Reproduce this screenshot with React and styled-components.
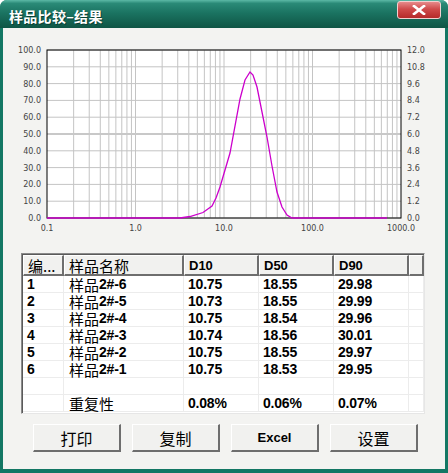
import React from "react";
import styled, { createGlobalStyle } from "styled-components";

const GlobalStyle = createGlobalStyle`
  html, body { margin: 0; padding: 0; background: #ffffff; }
  * { box-sizing: border-box; }
`;

const CJK = `"Noto Sans CJK SC", "Noto Sans", sans-serif`;
const LATIN = `"Liberation Sans", Arial, sans-serif`;

const rows = [
  ["1", "样品2#-6", "10.75", "18.55", "29.98"],
  ["2", "样品2#-5", "10.73", "18.55", "29.99"],
  ["3", "样品2#-4", "10.75", "18.54", "29.96"],
  ["4", "样品2#-3", "10.74", "18.56", "30.01"],
  ["5", "样品2#-2", "10.75", "18.55", "29.97"],
  ["6", "样品2#-1", "10.75", "18.53", "29.95"],
  ["", "", "", "", ""],
  ["", "重复性", "0.08%", "0.06%", "0.07%"],
];

// chart geometry (svg coords)
const PX = 44;
const PY = 22;
const PW = 354;
const PH = 168;
const DEC = PW / 4;

const curvePage = [
  [47, 218], [180, 218], [190, 216.5], [203, 212.5], [212, 206], [216, 198],
  [220, 187], [230, 153], [240, 99], [245, 80], [250, 72], [253, 75],
  [257, 87], [262, 112], [267, 137], [272, 166], [277, 192], [282, 207],
  [287, 215], [292, 218], [387, 218],
];

const Chart = () => {
  const vLines = [];
  for (let d = 0; d < 4; d++) {
    for (let k = 2; k <= 9; k++) {
      const x = PX + d * DEC + Math.log10(k) * DEC;
      vLines.push(x);
    }
    if (d > 0) vLines.push(PX + d * DEC);
  }
  const leftLabels = ["100.0", "90.0", "80.0", "70.0", "60.0", "50.0", "40.0", "30.0", "20.0", "10.0", "0.0"];
  const rightLabels = ["12.0", "10.8", "9.6", "8.4", "7.2", "6.0", "4.8", "3.6", "2.4", "1.2", "0.0"];
  const xLabels = ["0.1", "1.0", "10.0", "100.0", "1000.0"];
  const pts = curvePage.map(([x, y]) => `${x - 3},${y - 28}`).join(" ");
  return (
    <svg width="442" height="212" viewBox="0 0 442 212">
      <rect x={PX} y={PY} width={PW} height={PH} fill="#ffffff" />
      {vLines.map((x, i) => (
        <line key={"v" + i} x1={x} y1={PY} x2={x} y2={PY + PH} stroke="#c4c4c4" strokeWidth="1" />
      ))}
      {leftLabels.map((_, i) => {
        const y = PY + (PH / 10) * i;
        return (
          <line
            key={"h" + i}
            x1={PX}
            y1={y}
            x2={PX + PW}
            y2={y}
            stroke={i === 5 ? "#c8c8c8" : "#c4c4c4"}
            strokeWidth={i === 5 ? 2 : 1}
          />
        );
      })}
      <rect x={PX} y={PY} width={PW} height={PH} fill="none" stroke="#000" strokeWidth="1" />
      <polyline points={pts} fill="none" stroke="#cc00cc" strokeWidth="1.3" />
      <g fontFamily={`"DejaVu Sans", sans-serif`} fontSize="8" fill="#444">
        {leftLabels.map((t, i) => (
          <text key={"l" + i} x={PX - 6} y={PY + (PH / 10) * i + 3} textAnchor="end">{t}</text>
        ))}
        {rightLabels.map((t, i) => (
          <text key={"r" + i} x={PX + PW + 6} y={PY + (PH / 10) * i + 3}>{t}</text>
        ))}
        {xLabels.map((t, i) => (
          <text key={"x" + i} x={PX + DEC * i} y={PY + PH + 13} textAnchor="middle">{t}</text>
        ))}
      </g>
    </svg>
  );
};

const CloseIcon = () => (
  <svg width="14" height="10" viewBox="0 0 14 10">
    <path d="M2 1 L12 9 M12 1 L2 9" stroke="#fff" strokeWidth="2.6" strokeLinecap="square" />
  </svg>
);

const NameCell = ({ value }) => {
  if (!value) return <Cell $name />;
  if (value.startsWith("样品")) {
    return (
      <Cell $name>
        <CjkPart>样品</CjkPart>
        <span>{value.slice(2)}</span>
      </Cell>
    );
  }
  return (
    <Cell $name>
      <CjkPart>{value}</CjkPart>
    </Cell>
  );
};

export default function App() {
  return (
    <>
      <GlobalStyle />
      <Window>
        <TitleBar>
          <Title>样品比较–结果</Title>
          <CloseButton>
            <CloseIcon />
          </CloseButton>
        </TitleBar>
        <Body>
          <ChartArea>
            <Chart />
          </ChartArea>
          <ListView>
            <HeaderRow>
              <HeaderCell $cjk>编...</HeaderCell>
              <HeaderCell $cjk>样品名称</HeaderCell>
              <HeaderCell>D10</HeaderCell>
              <HeaderCell>D50</HeaderCell>
              <HeaderCell>D90</HeaderCell>
              <HeaderCell />
            </HeaderRow>
            {rows.map((r, i) => (
              <DataRow key={i}>
                <Cell>{r[0]}</Cell>
                <NameCell value={r[1]} />
                <Cell>{r[2]}</Cell>
                <Cell>{r[3]}</Cell>
                <Cell>{r[4]}</Cell>
                <Cell />
              </DataRow>
            ))}
          </ListView>
          <ButtonBar>
            <Button $cjk>打印</Button>
            <Button $cjk>复制</Button>
            <Button>Excel</Button>
            <Button $cjk>设置</Button>
          </ButtonBar>
        </Body>
      </Window>
    </>
  );
}

const Window = styled.div`
  width: 448px;
  height: 473px;
  display: flex;
  flex-direction: column;
  background: #137764;
  border-radius: 7px 7px 0 0;
  overflow: hidden;
`;

const TitleBar = styled.div`
  height: 28px;
  flex: none;
  display: flex;
  align-items: center;
  justify-content: space-between;
  padding: 0 7px 0 9px;
  background: linear-gradient(
    to bottom,
    #5cb9a6 0%,
    #2a8a77 12%,
    #1b7462 45%,
    #13604f 80%,
    #0f5545 100%
  );
`;

const Title = styled.div`
  font-family: ${CJK};
  font-weight: 700;
  font-size: 14px;
  color: #ffffff;
  letter-spacing: 0.3px;
  margin-top: 3px;
  text-shadow: 1px 1px 0 #0a3f33;
`;

const CloseButton = styled.div`
  width: 44px;
  height: 18px;
  margin-top: -8px;
  display: flex;
  align-items: center;
  justify-content: center;
  border-radius: 3px;
  border: 1px solid #f2d0d0;
  background: linear-gradient(to bottom, #e68a8a 0%, #cf4a4a 45%, #b52a2a 100%);
`;

const Body = styled.div`
  flex: 1;
  margin: 0 3px 4px 3px;
  background: #f3f3f1;
  display: flex;
  flex-direction: column;
`;

const ChartArea = styled.div`
  height: 212px;
  flex: none;
  svg { display: block; }
`;

const ListView = styled.div`
  margin: 13px 0 0 18px;
  width: 404px;
  height: 161px;
  background: #ffffff;
  border-top: 1px solid #8a8a8a;
  border-left: 1px solid #8a8a8a;
  border-right: 1px solid #e6e6e6;
  border-bottom: 1px solid #e6e6e6;
  box-shadow: inset 1px 1px 0 #5a5a5a;
  display: flex;
  flex-direction: column;
  padding: 1px 0 0 1px;
`;

const cols = "41px 120px 75px 75px 75px 1fr";

const HeaderRow = styled.div`
  display: grid;
  grid-template-columns: ${cols};
  height: 21px;
  flex: none;
`;

const HeaderCell = styled.div`
  background: #f1f1ef;
  border-top: 1px solid #ffffff;
  border-left: 1px solid #ffffff;
  border-right: 2px solid #6e6e6e;
  border-bottom: 2px solid #6e6e6e;
  padding-left: 4px;
  display: flex;
  align-items: center;
  line-height: 1;
  font-family: ${(p) => (p.$cjk ? CJK : LATIN)};
  font-size: ${(p) => (p.$cjk ? "15px" : "13px")};
  font-weight: ${(p) => (p.$cjk ? 400 : 700)};
  color: #000;
  white-space: nowrap;
  overflow: hidden;
`;

const DataRow = styled.div`
  display: grid;
  grid-template-columns: ${cols};
  height: 17px;
  flex: none;
  border-bottom: 1px solid #ececec;
`;

const Cell = styled.div`
  border-right: 1px solid #ececec;
  padding-left: ${(p) => (p.$name ? "5px" : "4px")};
  display: flex;
  align-items: center;
  line-height: 1;
  font-family: ${LATIN};
  font-size: 14px;
  letter-spacing: -0.2px;
  font-weight: 700;
  color: #000;
  white-space: nowrap;
`;

const CjkPart = styled.span`
  font-family: ${CJK};
  font-weight: 400;
  font-size: 15px;
  letter-spacing: 0;
  line-height: 1;
`;

const ButtonBar = styled.div`
  display: flex;
  gap: 11px;
  margin: 10px 0 0 30px;
`;

const Button = styled.div`
  width: 88px;
  height: 28px;
  display: flex;
  align-items: center;
  justify-content: center;
  background: #f1f1ef;
  border-top: 1px solid #ffffff;
  border-left: 1px solid #ffffff;
  border-right: 2px solid #6e6e6e;
  border-bottom: 2px solid #6e6e6e;
  font-family: ${(p) => (p.$cjk ? CJK : LATIN)};
  font-size: ${(p) => (p.$cjk ? "16px" : "13px")};
  font-weight: ${(p) => (p.$cjk ? 400 : 700)};
  color: #000;
`;
